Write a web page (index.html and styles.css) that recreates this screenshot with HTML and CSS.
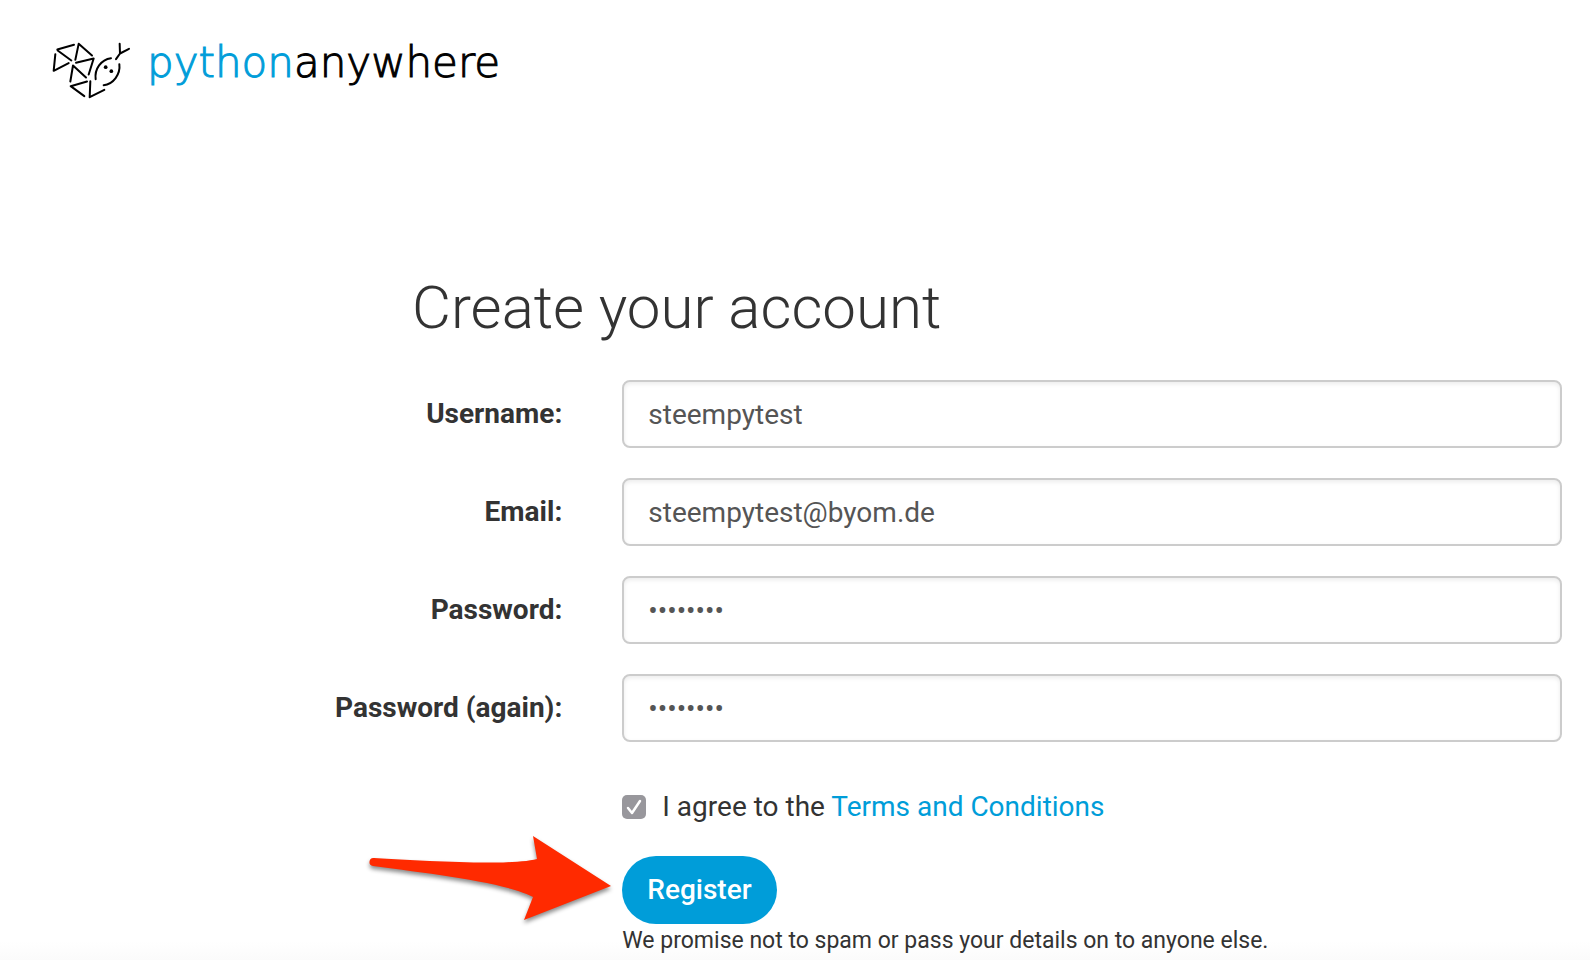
FILE: index.html
```html
<!DOCTYPE html>
<html lang="en">
<head>
<meta charset="utf-8">
<title>Create your account: PythonAnywhere</title>
<link rel="stylesheet" href="styles.css">
</head>
<body>
<header class="site-header">
  <a class="brand" href="#" aria-label="pythonanywhere">
    <svg class="brand-mark" viewBox="30 30 246 182" aria-hidden="true">
      <g fill="none" stroke="#000" stroke-width="6" stroke-linecap="round" stroke-linejoin="round">
        <path d="M52 58 102 44"/>
        <path d="M106 89 116 41 156 76"/>
        <path d="M53 61 94 91"/>
        <path d="M46 72 41 122 86 99"/>
        <path d="M108 98 161 85 146 133"/>
        <path d="M91 154 99 106 138 142"/>
        <path d="M133 198 92 168 141 154"/>
        <path d="M151 153 149 201 193 179"/>
        <path d="M239 41 240 70 228 87M240 70 267 56"/>
        <path d="M213 84C183 88 163 116 167 147"/>
        <path d="M238 102C242 132 220 162 191 165"/>
      </g>
      <circle cx="197" cy="111" r="5.5"/>
      <circle cx="214" cy="123" r="5.5"/>
    </svg>
    <span class="brand-name"><span class="brand-accent">python</span>anywhere</span>
  </a>
</header>
<main class="signup">
  <h1 class="title">Create your account</h1>
  <form class="form">
    <label class="label" for="username">Username:</label>
    <input class="field" id="username" type="text" value="steempytest">
    <label class="label" for="email">Email:</label>
    <input class="field" id="email" type="email" value="steempytest@byom.de">
    <label class="label" for="password1">Password:</label>
    <input class="field" id="password1" type="password" value="password">
    <label class="label" for="password2">Password (again):</label>
    <input class="field" id="password2" type="password" value="password">
    <div class="actions">
      <div class="agree">
        <input class="check" id="tos" type="checkbox" checked>
        <label for="tos">I agree to the <a class="link" href="#">Terms and Conditions</a></label>
      </div>
      <div class="submit">
        <button class="button" type="submit">Register</button>
        <svg class="arrow" viewBox="0 0 260 100" aria-hidden="true">
          <path d="M12 30C64 33 148 38 175 31L171 8L249 58L162 92L171 69C142 54 70 46 11 38A4 4 0 0 1 12 30Z" fill="#ff2a00"/>
        </svg>
      </div>
      <p class="note">We promise not to spam or pass your details on to anyone else.</p>
    </div>
  </form>
</main>
</body>
</html>
```
FILE: styles.css
```css
* { box-sizing: border-box; }

body {
  margin: 0;
  min-height: 100vh;
  background: linear-gradient(#fff 98%, #fbfbfb);
  color: #333;
  font: 28px/40px Roboto, sans-serif;
}

.site-header { padding: 40px 50px 0; }

.brand {
  display: inline-flex;
  align-items: flex-start;
  gap: 15px;
  color: #000;
  text-decoration: none;
}

.brand-mark { width: 82px; height: 61px; }

.brand-name {
  font: 200 42px/46px "DejaVu Sans", sans-serif;
  -webkit-text-stroke: 1px currentColor;
}

.brand-accent { color: #009dd9; }

.signup { padding: 158px 28px 0 0; }

.title {
  margin: 0 0 34px 412px;
  font-size: 60px;
  font-weight: 300;
  line-height: 76px;
}

.form {
  display: grid;
  grid-template-columns: 36% 1fr;
  gap: 30px 60px;
  align-items: center;
}

.label {
  text-align: right;
  font-weight: 700;
}

.field {
  width: 100%;
  height: 68px;
  padding: 0 24px;
  border: 2px solid #ccc;
  border-radius: 8px;
  background: #fff;
  box-shadow: inset 0 2px 4px rgba(0, 0, 0, .08);
  color: #555;
  font: inherit;
}

.actions { grid-column: 2; }

.agree {
  display: flex;
  align-items: center;
  gap: 16px;
  padding: 15px 0 29px;
}

.check {
  appearance: none;
  width: 24px;
  height: 24px;
  margin: 0;
  border-radius: 5px;
  background: #98979c url("data:image/svg+xml,%3Csvg xmlns='http://www.w3.org/2000/svg' viewBox='0 0 24 24'%3E%3Cpath d='M6 13l4 5 8-12' fill='none' stroke='white' stroke-width='2.5' stroke-linecap='round' stroke-linejoin='round'/%3E%3C/svg%3E");
}

.link { color: #009dd9; text-decoration: none; }

.submit {
  position: relative;
  width: fit-content;
}

.button {
  display: block;
  height: 68px;
  padding: 0 25px;
  border: 0;
  border-radius: 34px;
  background: #009dd9;
  color: #fff;
  font: 500 28px/40px Roboto, sans-serif;
}

.arrow {
  position: absolute;
  right: 100%;
  top: -28px;
  width: 260px;
  height: 100px;
  overflow: visible;
  filter: drop-shadow(0 3px 2px rgba(0, 0, 0, .45));
}

.note {
  margin: 0;
  font-size: 23px;
  line-height: 34px;
}
```
